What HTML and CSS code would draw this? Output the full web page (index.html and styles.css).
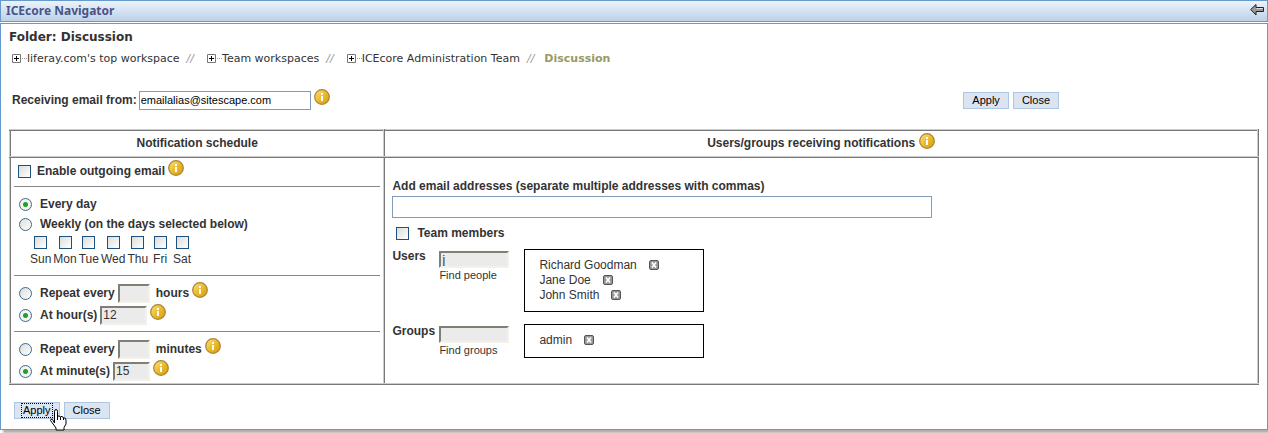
FILE: index.html
```html
<!DOCTYPE html>
<html lang="en">
<head>
<meta charset="utf-8">
<title>ICEcore Navigator</title>
<link rel="stylesheet" href="styles.css">
</head>
<body>
<svg class="defs" width="0" height="0" aria-hidden="true">
  <defs>
    <linearGradient id="gold" x1="0" y1="0" x2="1" y2="1">
      <stop offset="0" stop-color="#fbe28c"/>
      <stop offset="0.5" stop-color="#ebbb2c"/>
      <stop offset="1" stop-color="#d39d10"/>
    </linearGradient>
    <symbol id="info" viewBox="0 0 16 16">
      <circle cx="8" cy="8" r="7.3" fill="url(#gold)" stroke="#a98332" stroke-width="1.2"/>
      <path d="M7 4h2v2H7zM7 7h2v5H7z" fill="#fff"/>
    </symbol>
    <symbol id="remove" viewBox="0 0 10 10">
      <rect x="0.500" y="0.500" width="9" height="9" rx="1.500" fill="#999" stroke="#555"/>
      <path d="M3 2.500l4 5M7 2.500l-4 5" stroke="#fff" stroke-width="1.600"/>
    </symbol>
    <symbol id="expand" viewBox="0 0 15 9">
      <path d="M.5.5h8v8h-8z" fill="#fff" stroke="#777"/>
      <path d="M2 4.500h5M4.500 2v5" stroke="#000"/>
      <path d="M10 4.500h5" stroke="#999" stroke-dasharray="1 1"/>
    </symbol>
  </defs>
</svg>
<section class="portlet">
  <header class="titlebar">
    <h1 class="title">ICEcore Navigator</h1>
    <button class="back" type="button" aria-label="Back">
      <svg width="14" height="12" viewBox="0 0 14 12"><path d="M.7 5.500L6 .5V3.500h7.500v4H6v3.500z" fill="#999" stroke="#222"/><path d="M6.500 4.500h6.500" stroke="#ddd"/></svg>
    </button>
  </header>
  <main class="content">
    <h2 class="folder">Folder: <span>Discussion</span></h2>
    <nav class="crumbs" aria-label="Breadcrumb">
      <a class="crumb" href="#"><svg class="expand"><use href="#expand"/></svg>liferay.com's top workspace</a>
      <span class="sep">//</span>
      <a class="crumb" href="#"><svg class="expand"><use href="#expand"/></svg>Team workspaces</a>
      <span class="sep">//</span>
      <a class="crumb" href="#"><svg class="expand"><use href="#expand"/></svg>ICEcore Administration Team</a>
      <span class="sep">//</span>
      <a class="crumb current" href="#">Discussion</a>
    </nav>
    <form class="form">
      <div class="sender">
        <label class="strong" for="from">Receiving email from:</label>
        <input class="box from" id="from" type="text" value="emailalias@sitescape.com">
        <svg class="info"><use href="#info"/></svg>
        <div class="actions top-actions">
          <button class="btn" type="button">Apply</button>
          <button class="btn" type="button">Close</button>
        </div>
      </div>
      <table class="settings">
        <thead>
          <tr>
            <th class="schedule">Notification schedule</th>
            <th><span class="heading">Users/groups receiving notifications<svg class="info"><use href="#info"/></svg></span></th>
          </tr>
        </thead>
        <tbody>
          <tr>
            <td>
              <div class="group enable">
                <div class="row">
                  <input class="check" type="checkbox" id="enable">
                  <label class="strong" for="enable">Enable outgoing email</label>
                  <svg class="info"><use href="#info"/></svg>
                </div>
              </div>
              <div class="group frequency">
                <div class="row short">
                  <input class="radio" type="radio" name="freq" id="daily" checked>
                  <label class="strong" for="daily">Every day</label>
                </div>
                <div class="row short">
                  <input class="radio" type="radio" name="freq" id="weekly">
                  <label class="strong" for="weekly">Weekly (on the days selected below)</label>
                </div>
                <div class="days">
                  <label class="day"><input class="check" type="checkbox">Sun</label>
                  <label class="day"><input class="check" type="checkbox">Mon</label>
                  <label class="day"><input class="check" type="checkbox">Tue</label>
                  <label class="day"><input class="check" type="checkbox">Wed</label>
                  <label class="day"><input class="check" type="checkbox">Thu</label>
                  <label class="day"><input class="check" type="checkbox">Fri</label>
                  <label class="day"><input class="check" type="checkbox">Sat</label>
                </div>
              </div>
              <div class="group times">
                <div class="row">
                  <input class="radio" type="radio" name="hour" id="hour-repeat">
                  <label class="strong" for="hour-repeat">Repeat every</label>
                  <input class="inset tiny" type="text" aria-label="Repeat every, in hours">
                  <span class="strong unit">hours</span>
                  <svg class="info"><use href="#info"/></svg>
                </div>
                <div class="row">
                  <input class="radio" type="radio" name="hour" id="hour-at" checked>
                  <label class="strong" for="hour-at">At hour(s)</label>
                  <input class="inset hour" type="text" value="12" aria-label="Hours">
                  <svg class="info"><use href="#info"/></svg>
                </div>
              </div>
              <div class="group times">
                <div class="row">
                  <input class="radio" type="radio" name="minute" id="min-repeat">
                  <label class="strong" for="min-repeat">Repeat every</label>
                  <input class="inset tiny" type="text" aria-label="Repeat every, in minutes">
                  <span class="strong unit">minutes</span>
                  <svg class="info"><use href="#info"/></svg>
                </div>
                <div class="row">
                  <input class="radio" type="radio" name="minute" id="min-at" checked>
                  <label class="strong" for="min-at">At minute(s)</label>
                  <input class="inset minute" type="text" value="15" aria-label="Minutes">
                  <svg class="info"><use href="#info"/></svg>
                </div>
              </div>
            </td>
            <td>
              <div class="recipients">
                <label class="strong block" for="emails">Add email addresses (separate multiple addresses with commas)</label>
                <input class="box emails" type="text" id="emails">
                <div class="team">
                  <input class="check" type="checkbox" id="team">
                  <label class="strong" for="team">Team members</label>
                </div>
                <div class="finder">
                  <label class="strong" for="users">Users</label>
                  <div class="lookup">
                    <input class="inset find" type="text" id="users" value="j">
                    <span class="hint">Find people</span>
                  </div>
                  <ul class="picked">
                    <li>Richard Goodman<button class="remove" type="button" aria-label="Remove Richard Goodman"><svg><use href="#remove"/></svg></button></li>
                    <li>Jane Doe<button class="remove" type="button" aria-label="Remove Jane Doe"><svg><use href="#remove"/></svg></button></li>
                    <li>John Smith<button class="remove" type="button" aria-label="Remove John Smith"><svg><use href="#remove"/></svg></button></li>
                  </ul>
                </div>
                <div class="finder">
                  <label class="strong" for="groups">Groups</label>
                  <div class="lookup">
                    <input class="inset find" type="text" id="groups">
                    <span class="hint">Find groups</span>
                  </div>
                  <ul class="picked">
                    <li>admin<button class="remove" type="button" aria-label="Remove admin"><svg><use href="#remove"/></svg></button></li>
                  </ul>
                </div>
              </div>
            </td>
          </tr>
        </tbody>
      </table>
      <div class="actions bottom-actions">
        <button class="btn" type="button"><span class="focused">Apply</span></button>
        <button class="btn" type="button">Close</button>
        <svg class="pointer" viewBox="0 0 17 22"><path d="M4.500 14V2.500q0-2 1.500-2t1.500 2V8q0-1.500 1.500-1t1.500 1.500q0-1.500 1.500-1t1.500 1.500q2.500-.8 2.500 2v4l-2 3.500v2.500H6V19l-4-5.500-1.500-2q0-2 2-1.200z" fill="#fff" stroke="#000"/><path d="M7.500 8v3M10.500 8v3M13.500 9v2" stroke="#000"/></svg>
      </div>
    </form>
  </main>
</section>
</body>
</html>
```
FILE: styles.css
```css
* { box-sizing: border-box; }
body {
  margin: 0;
  background: #fff;
  color: #333;
  font: 12px/15px "Liberation Sans", Arial, sans-serif;
}
h1, h2, ul { margin: 0; padding: 0; }
ul { list-style: none; }
a { color: inherit; text-decoration: none; }
button, input { margin: 0; font: inherit; color: inherit; }
.defs { position: absolute; }

.portlet { padding-bottom: 4px; overflow: hidden; }
.titlebar {
  display: flex;
  justify-content: space-between;
  align-items: center;
  height: 22px;
  padding: 0 3px 0 5px;
  border: 1px solid #69c;
  background: linear-gradient(#ecf2fb, #bcd2e8);
}
.title { color: #4a5488; font: bold 12px/20px "Noto Sans", Tahoma, sans-serif; }
.back { display: flex; padding: 0 0 3px; border: 0; background: none; }

.content {
  margin-top: 1px;
  padding: 6px 8px 10px;
  border: 1px solid #69c;
  box-shadow: 3px 3px 2px #b5aeaa;
}
.folder { font: bold 12px/15px "DejaVu Sans", Verdana, sans-serif; }
.crumbs {
  display: flex;
  align-items: center;
  gap: 7px;
  margin: 6px 3px 23px;
  font: 11px/15px "DejaVu Sans", Verdana, sans-serif;
}
.crumb { display: flex; align-items: center; }
.expand { width: 15px; height: 9px; }
.sep { padding-right: 3px; color: #999; font-style: italic; }
.sep + .crumb:not(.current) { margin-left: 3px; }
.current { color: #996; font-weight: bold; }

.strong { font-weight: bold; }
.info { flex: none; width: 16px; height: 16px; margin-bottom: 6px; }
.box { border: 1px solid #7f9db9; background: #fff; }
.sender { display: flex; align-items: center; margin: 0 200px 18px 3px; }
.from { width: 172px; height: 19px; margin: 0 3px 0 2px; padding: 0 1px; color: #000; font-size: 11px; }
.actions { display: flex; gap: 4px; }
.top-actions { margin-left: auto; }
.btn {
  height: 17px;
  padding: 0 8px;
  border: 1px solid #afc6e3;
  background: #dbe5f1;
  color: #000;
  font-size: 11px;
  line-height: 15px;
}

.settings { width: 100%; border-collapse: collapse; }
.settings th, .settings td { padding: 0; border: 2px ridge #ccc; vertical-align: top; }
.settings th { height: 27px; vertical-align: middle; }
.schedule { width: 30%; }
.heading { display: inline-flex; align-items: center; gap: 4px; }
.heading .info { margin-bottom: 5px; }

.group { margin: 0 3px; padding: 0 5px; border-bottom: 1px solid #888; }
.row { display: flex; align-items: center; gap: 3px; height: 22px; }
.short { height: 20px; }
.enable { padding: 2px 4px 4px; }
.enable .check { margin-right: 3px; }
.check {
  appearance: none;
  flex: none;
  width: 13px;
  height: 13px;
  border: 1px solid #1c5180;
  background: linear-gradient(135deg, #dcdcd7, #fff);
}
.radio {
  appearance: none;
  flex: none;
  width: 13px;
  height: 13px;
  margin-right: 5px;
  border: 1px solid #41698f;
  border-radius: 50%;
  background: linear-gradient(135deg, #dcdcd7, #fff);
}
.radio:checked { background: radial-gradient(circle, #21a121 2px, #f4f4f1 3px); }
.frequency { padding: 7px 5px 8px; }
.days { display: flex; gap: 2px; padding: 2px 0 0 11px; }
.day { display: flex; flex-direction: column; align-items: center; gap: 3px; min-width: 20px; }
.inset {
  height: 19px;
  padding: 0 1px;
  border: 2px solid;
  border-color: #807f75 #f2f1ea #f2f1ea #807f75;
  background: #ebebeb;
}
.times { padding: 6px 5px 5px; }
.times:last-child { padding-bottom: 1px; border-bottom: 0; }
.tiny { width: 32px; }
.hour { width: 47px; }
.minute { width: 37px; }
.unit { padding-left: 3px; }

.recipients { padding: 21px 7px 24px; }
.block { display: block; }
.emails { display: block; width: 540px; max-width: 100%; height: 22px; margin-top: 2px; }
.team { display: flex; align-items: center; gap: 8px; margin: 8px 4px; }
.finder { display: grid; grid-template-columns: 47px 85px 180px; margin-bottom: 12px; }
.finder:last-child { margin-bottom: 0; }
.lookup { display: flex; flex-direction: column; align-items: flex-start; padding-top: 2px; }
.find { width: 70px; height: 17px; }
.hint { font-size: 11px; }
.picked { padding: 8px 14px; border: 1px solid #000; }
.picked li { display: flex; align-items: center; }
.remove { display: flex; margin-left: 12px; padding: 0 0 2px; border: 0; background: none; }
.remove svg { width: 10px; height: 10px; }

.bottom-actions { position: relative; margin: 17px 5px 0; }
.focused { display: block; margin: 0 -2px; padding: 0 2px; outline: 1px dotted #000; outline-offset: -1px; }
.pointer { position: absolute; left: 36px; top: 7px; width: 17px; height: 22px; }
```
